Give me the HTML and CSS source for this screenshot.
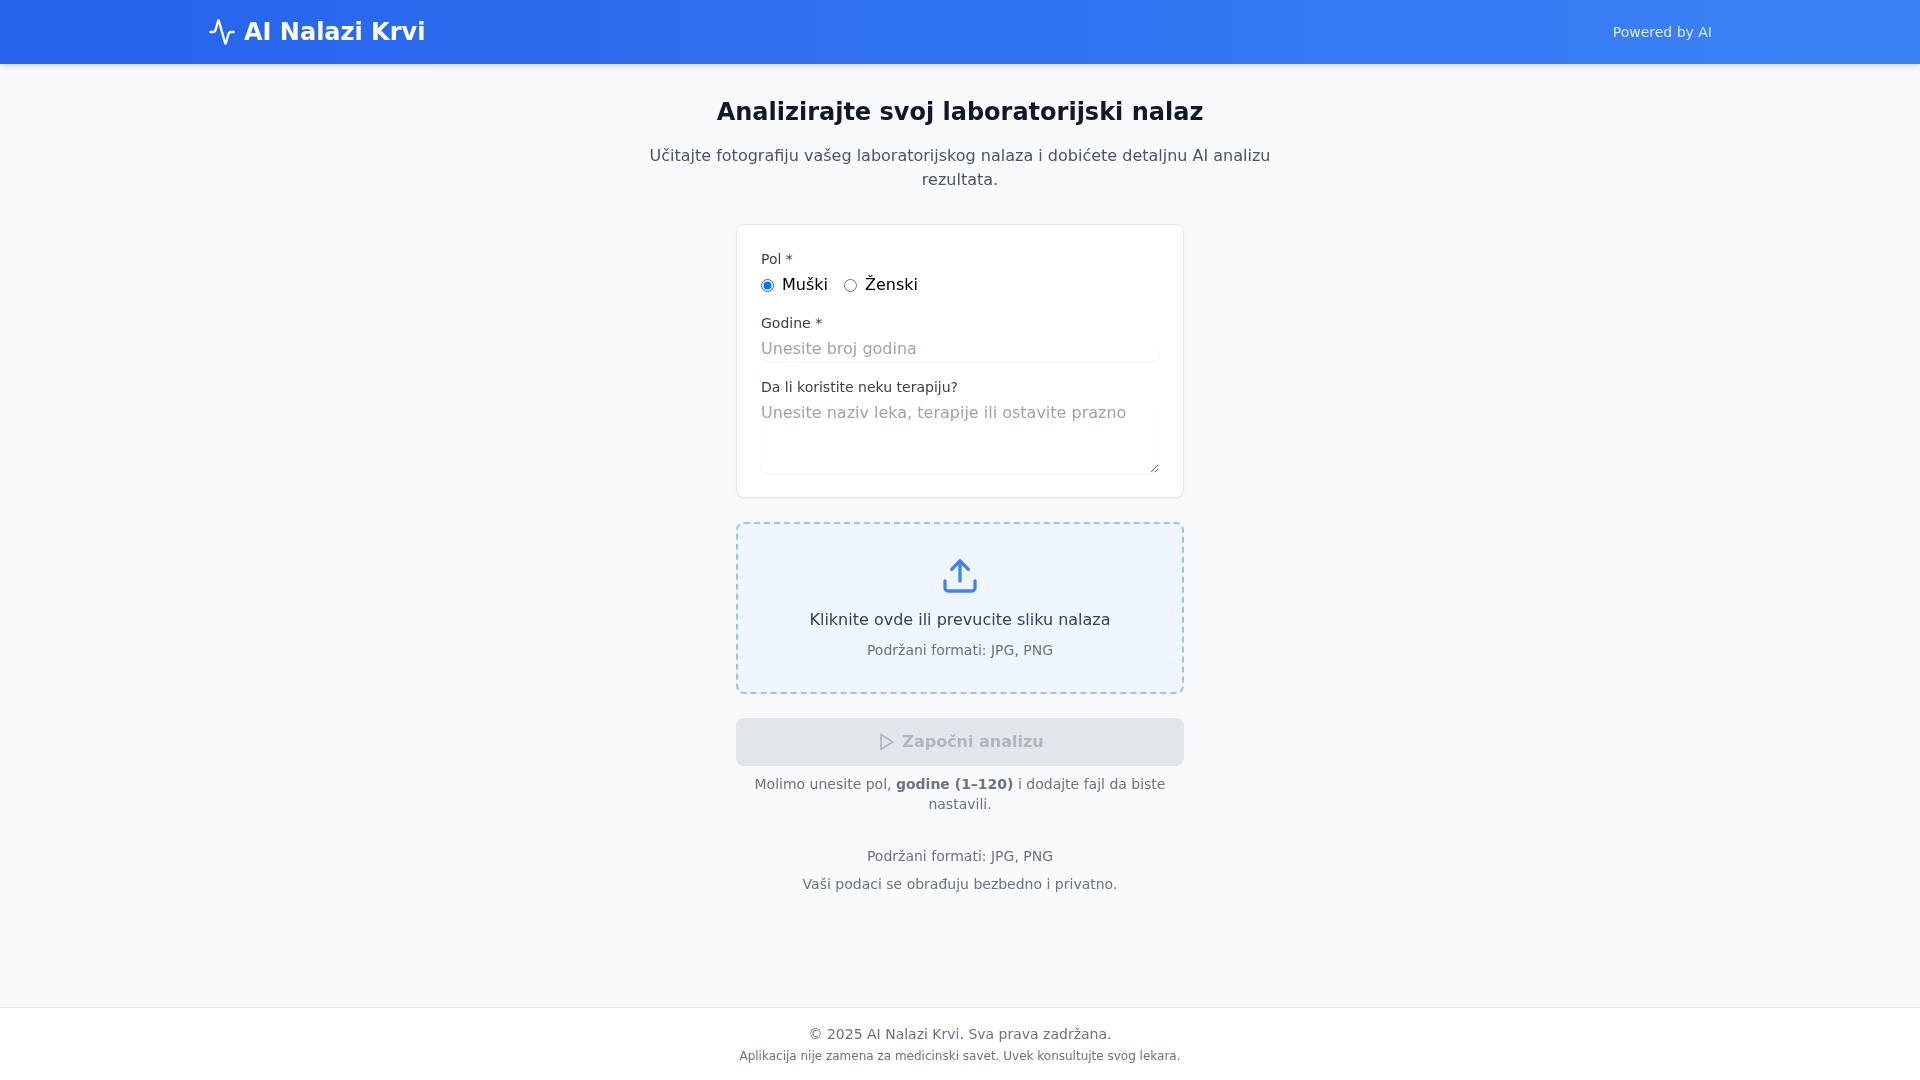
FILE: index.html
```html
<!DOCTYPE html>
<html lang="sr">
<head>
<meta charset="utf-8">
<title>AI Nalazi Krvi</title>
<link rel="stylesheet" href="styles.css">
</head>
<body>
<header class="site-header">
  <div class="header-inner">
    <div class="brand">
      <svg class="brand-icon" viewBox="0 0 24 24" fill="none" stroke="currentColor" stroke-width="2" stroke-linecap="round" stroke-linejoin="round"><path d="M22 12h-2.48a2 2 0 0 0-1.93 1.46l-2.35 8.36a.25.25 0 0 1-.48 0L9.24 2.18a.25.25 0 0 0-.48 0l-2.35 8.36A2 2 0 0 1 4.49 12H2"/></svg>
      <h1 class="brand-title">AI Nalazi Krvi</h1>
    </div>
    <span class="powered">Powered by AI</span>
  </div>
</header>
<main class="main">
  <h2 class="page-title">Analizirajte svoj laboratorijski nalaz</h2>
  <p class="page-desc">Učitajte fotografiju vašeg laboratorijskog nalaza i dobićete detaljnu AI analizu rezultata.</p>
  <div class="column">
    <form class="card">
      <div class="field">
        <span class="label">Pol *</span>
        <div class="radios">
          <label class="radio"><input type="radio" name="pol" checked>Muški</label>
          <label class="radio"><input type="radio" name="pol">Ženski</label>
        </div>
      </div>
      <div class="field">
        <label class="label" for="age">Godine *</label>
        <input class="input" id="age" type="text" placeholder="Unesite broj godina">
      </div>
      <div class="field">
        <label class="label" for="therapy">Da li koristite neku terapiju?</label>
        <textarea class="input textarea" id="therapy" rows="3" placeholder="Unesite naziv leka, terapije ili ostavite prazno"></textarea>
      </div>
    </form>
    <div class="dropzone">
      <svg class="upload-icon" viewBox="0 0 24 24" fill="none" stroke="currentColor" stroke-width="2" stroke-linecap="round" stroke-linejoin="round"><path d="M21 15v4a2 2 0 0 1-2 2H5a2 2 0 0 1-2-2v-4"/><polyline points="17 8 12 3 7 8"/><line x1="12" y1="3" x2="12" y2="15"/></svg>
      <p class="drop-title">Kliknite ovde ili prevucite sliku nalaza</p>
      <p class="drop-sub">Podržani formati: JPG, PNG</p>
    </div>
    <button class="submit" type="button" disabled>
      <svg class="play-icon" viewBox="0 0 24 24" fill="none" stroke="currentColor" stroke-width="2" stroke-linecap="round" stroke-linejoin="round"><polygon points="6 3 20 12 6 21 6 3"/></svg>
      <span>Započni analizu</span>
    </button>
    <p class="hint">Molimo unesite pol, <strong>godine (1–120)</strong> i dodajte fajl da biste nastavili.</p>
  </div>
  <div class="notes">
    <p>Podržani formati: JPG, PNG</p>
    <p>Vaši podaci se obrađuju bezbedno i privatno.</p>
  </div>
</main>
<footer class="footer">
  <p class="footer-main">© 2025 AI Nalazi Krvi. Sva prava zadržana.</p>
  <p class="footer-small">Aplikacija nije zamena za medicinski savet. Uvek konsultujte svog lekara.</p>
</footer>
</body>
</html>
```
FILE: styles.css
```css
* { box-sizing: border-box; }
html, body { margin: 0; padding: 0; }
body {
  min-height: 100vh;
  display: flex;
  flex-direction: column;
  background: #f9fafb;
  color: #111827;
  font-family: "DejaVu Sans", sans-serif;
  font-size: 16px;
  line-height: 24px;
}
p, h1, h2 { margin: 0; }

.site-header, .main, .footer { will-change: transform; }

.site-header {
  height: 64px;
  background: linear-gradient(to right, #2563eb, #3b82f6);
  box-shadow: 0 4px 6px -1px rgba(0,0,0,.1), 0 2px 4px -2px rgba(0,0,0,.1);
  color: #fff;
}
.header-inner {
  max-width: 1536px;
  height: 100%;
  margin: 0 auto;
  padding: 0 16px;
  display: flex;
  align-items: center;
  justify-content: space-between;
}
.brand { display: flex; align-items: center; gap: 8px; }
.brand-icon { width: 28px; height: 28px; display: block; }
.brand-title { font-size: 24px; line-height: 32px; font-weight: 700; }
.powered { font-size: 14px; line-height: 20px; color: #dbeafe; }

.main {
  flex: 1;
  display: flex;
  flex-direction: column;
  align-items: center;
  padding-top: 32px;
}
.page-title { font-size: 24px; line-height: 32px; font-weight: 700; color: #111827; text-align: center; margin-bottom: 16px; }
.page-desc { max-width: 672px; text-align: center; color: #4b5563; margin-bottom: 32px; }
.column { width: 448px; display: flex; flex-direction: column; }

.card {
  background: #fff;
  border: 1px solid #e5e7eb;
  border-radius: 8px;
  box-shadow: 0 1px 2px rgba(0,0,0,.05);
  padding: 24px;
  display: flex;
  flex-direction: column;
  gap: 16px;
  margin-bottom: 24px;
}
.field { display: flex; flex-direction: column; gap: 4px; }
.label { font-size: 14px; line-height: 20px; font-weight: 500; color: #374151; }
.radios { display: flex; gap: 16px; }
.radio { display: flex; align-items: center; gap: 8px; color: #000; }
.radio input { margin: 0; width: 13px; height: 13px; }
.input {
  display: block;
  width: 100%;
  height: 24px;
  padding: 0;
  border: 0;
  border-radius: 6px;
  background: #fff;
  box-shadow: 0 1px 2px rgba(0,0,0,.05);
  outline: none;
  font: inherit;
  color: #111827;
}
.input::placeholder { color: #9ca3af; opacity: 1; }
.textarea { height: 72px; resize: vertical; }

.dropzone {
  display: flex;
  flex-direction: column;
  align-items: center;
  padding: 32px;
  border: 2px dashed #93c5fd;
  border-radius: 8px;
  background: #eff6ff;
  margin-bottom: 24px;
}
.upload-icon { width: 40px; height: 40px; color: #3b82f6; display: block; margin-bottom: 12px; }
.drop-title { color: #374151; }
.drop-sub { font-size: 14px; line-height: 20px; color: #6b7280; margin-top: 8px; }

.submit {
  height: 48px;
  width: 100%;
  border: 0;
  border-radius: 8px;
  background: #e2e5e9;
  color: #b0b5be;
  display: flex;
  align-items: center;
  justify-content: center;
  gap: 6px;
  font: inherit;
  font-weight: 700;
}
.play-icon { width: 20px; height: 20px; display: block; }
.hint { font-size: 14px; line-height: 20px; color: #6b7280; text-align: center; margin-top: 8px; }
.hint strong { font-weight: 700; }

.notes { margin-top: 32px; font-size: 14px; line-height: 20px; color: #6b7280; text-align: center; display: flex; flex-direction: column; gap: 8px; }

.footer {
  height: 73px;
  background: #fff;
  border-top: 1px solid #e5e7eb;
  padding-top: 16px;
  text-align: center;
  color: #6b7280;
}
.footer-main { font-size: 14px; line-height: 20px; }
.footer-small { font-size: 12px; line-height: 16px; margin-top: 4px; }
```
